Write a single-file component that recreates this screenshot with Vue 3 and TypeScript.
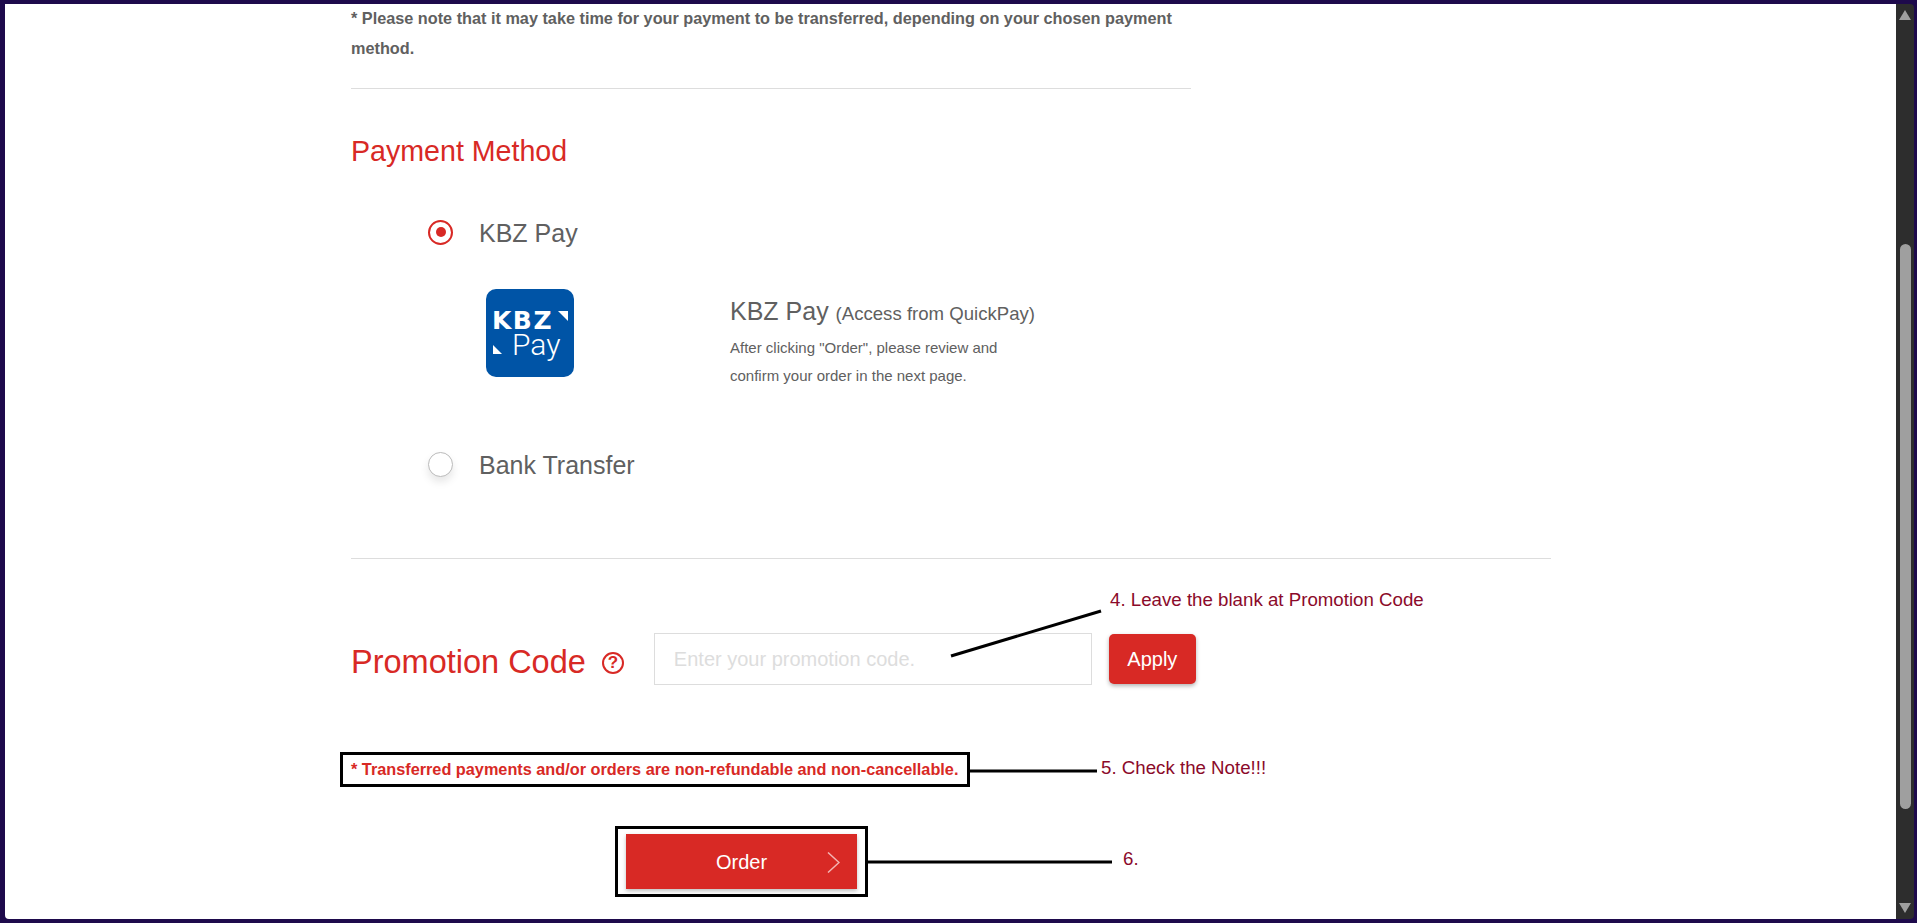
<template>
  <div class="frame">
    <div class="page">
      <div class="content">
        <p class="transfer-note">
          * Please note that it may take time for your payment to be transferred, depending on your chosen payment
          method.
        </p>
        <hr class="rule rule-short" />

        <h2 class="section-title">Payment Method</h2>

        <div class="method-row" @click="method = 'kbz'">
          <span :class="['radio', { checked: method === 'kbz' }]"></span>
          <span class="method-name">KBZ Pay</span>
        </div>

        <div class="method-detail">
          <svg class="kbz-logo" viewBox="0 0 88 88" width="88" height="88">
            <rect width="88" height="88" rx="10" fill="#0054a6" />
            <text x="6" y="40" class="logo-kbz">KBZ</text>
            <text x="26" y="66" class="logo-pay">Pay</text>
            <polygon points="72,22 82,22 82,32" fill="#fff" />
            <polygon points="7,56 7,65 16,65" fill="#fff" />
          </svg>
          <div class="detail-text">
            <div class="detail-title">KBZ Pay <small>(Access from QuickPay)</small></div>
            <p class="detail-desc">
              After clicking "Order", please review and<br />
              confirm your order in the next page.
            </p>
          </div>
        </div>

        <div class="method-row bank-row" @click="method = 'bank'">
          <span :class="['radio', { checked: method === 'bank' }]"></span>
          <span class="method-name">Bank Transfer</span>
        </div>

        <hr class="rule rule-long" />

        <div class="promo-row">
          <h2 class="promo-title">Promotion Code</h2>
          <span class="help-icon">?</span>
          <input class="promo-input" type="text" placeholder="Enter your promotion code." />
          <button class="apply-btn">Apply</button>
        </div>

        <p class="refund-note">* Transferred payments and/or orders are non-refundable and non-cancellable.</p>

        <button class="order-btn">
          Order
          <svg class="order-arrow" viewBox="0 0 13 21" width="13" height="21">
            <path d="M1 0.5 L12 10.5 L1 20.5" fill="none" stroke="#f3b5b3" stroke-width="1.5" />
          </svg>
        </button>
      </div>

      <!-- annotations drawn over the page -->
      <svg class="marks" width="1892" height="915">
        <line x1="946" y1="652" x2="1096" y2="607" stroke="#000" stroke-width="3" />
        <rect x="336.5" y="749.5" width="627" height="32" fill="none" stroke="#000" stroke-width="3" />
        <line x1="964" y1="767" x2="1092" y2="767" stroke="#000" stroke-width="3" />
        <rect x="611.5" y="823.5" width="250" height="68" fill="none" stroke="#000" stroke-width="3" />
        <line x1="862" y1="858" x2="1107" y2="858" stroke="#000" stroke-width="3" />
      </svg>
      <span class="mark-text mark-4">4. Leave the blank at Promotion Code</span>
      <span class="mark-text mark-5">5. Check the Note!!!</span>
      <span class="mark-text mark-6">6.</span>
    </div>

    <div class="scrollbar">
      <span class="arrow arrow-up"></span>
      <div class="track"><div class="thumb"></div></div>
      <span class="arrow arrow-down"></span>
    </div>
  </div>
</template>

<script setup lang="ts">
import { ref } from "vue";

const method = ref<"kbz" | "bank">("kbz");
</script>

<style>
html,
body {
  margin: 0;
  overflow: hidden;
}
</style>

<style scoped>
.frame {
  display: flex;
  width: 1917px;
  height: 923px;
  box-sizing: border-box;
  padding: 4px 3px 4px 5px;
  background: #1e0a4c;
  font-family: "Liberation Sans", Arial, sans-serif;
  color: #606060;
}

.page {
  position: relative;
  flex: 1;
  background: #fff;
  border-bottom-left-radius: 4px;
  overflow: hidden;
}

.content {
  padding-left: 346px;
}

.transfer-note {
  width: 840px;
  margin: -1px 0 0;
  font-size: 16.25px;
  font-weight: bold;
  line-height: 30px;
}

.rule {
  height: 1px;
  margin: 0;
  border: none;
  background: #ddd;
}

.rule-short {
  width: 840px;
  margin-top: 25px;
}

.rule-long {
  width: 1200px;
  margin-top: 78px;
}

.section-title {
  margin: 44px 0 0;
  font-size: 28.6px;
  font-weight: normal;
  line-height: 36px;
  color: #d82925;
}

.method-row {
  display: flex;
  align-items: center;
  height: 32px;
  margin: 47px 0 0 77px;
  cursor: pointer;
}

.radio {
  position: relative;
  width: 25px;
  height: 25px;
  box-sizing: border-box;
  border: 1px solid #bbb;
  border-radius: 50%;
  background: #fff;
  box-shadow: 0 5px 8px rgba(0, 0, 0, 0.1);
}

.radio.checked {
  border: 2px solid #d82925;
  box-shadow: none;
}

.radio.checked::after {
  content: "";
  position: absolute;
  top: 5.5px;
  left: 5.5px;
  width: 10px;
  height: 10px;
  border-radius: 50%;
  background: #d82925;
}

.method-name {
  margin-left: 26px;
  padding-top: 2px;
  font-size: 25px;
}

.method-detail {
  display: flex;
  margin: 41px 0 0 135px;
}

.kbz-logo {
  flex-shrink: 0;
}

.logo-kbz {
  font-family: "DejaVu Sans", "Liberation Sans", sans-serif;
  font-size: 25px;
  font-weight: bold;
  letter-spacing: 1.5px;
  fill: #fff;
}

.logo-pay {
  font-family: Roboto, "Liberation Sans", sans-serif;
  font-size: 30px;
  font-weight: 300;
  fill: #fff;
}

.detail-text {
  margin: 6px 0 0 156px;
}

.detail-title {
  font-size: 25px;
  line-height: 32px;
}

.detail-title small {
  font-size: 18.6px;
}

.detail-desc {
  margin: 4px 0 0;
  font-size: 15px;
  line-height: 28px;
}

.bank-row {
  margin-top: 58px;
}

.promo-row {
  display: flex;
  align-items: center;
  margin-top: 73px;
}

.promo-title {
  margin: 0;
  padding-top: 6px;
  font-size: 32.5px;
  font-weight: normal;
  line-height: 48px;
  color: #d82925;
}

.help-icon {
  display: flex;
  align-items: center;
  justify-content: center;
  width: 22px;
  height: 22px;
  box-sizing: border-box;
  margin: 8px 0 0 16px;
  border: 2px solid #d82925;
  border-radius: 50%;
  font-size: 17px;
  font-weight: bold;
  color: #d82925;
}

.promo-input {
  width: 438px;
  height: 52px;
  box-sizing: border-box;
  margin-left: 30px;
  padding: 0 19px;
  border: 1px solid #ddd;
  outline: none;
  font-family: inherit;
  font-size: 20px;
}

.promo-input::placeholder {
  color: #ddd;
}

.apply-btn {
  width: 87px;
  height: 50px;
  margin-left: 17px;
  border: none;
  border-radius: 5px;
  background: #d82925;
  box-shadow: 0 2px 4px rgba(0, 0, 0, 0.3);
  font-family: inherit;
  font-size: 20px;
  color: #fff;
}

.refund-note {
  margin: 71px 0 0;
  font-size: 16.27px;
  font-weight: bold;
  line-height: 24px;
  color: #d82925;
}

.order-btn {
  position: relative;
  display: block;
  width: 231px;
  height: 55px;
  margin: 53px 0 0 275px;
  padding-top: 3px;
  border: none;
  background: #d82925;
  box-shadow: 0 2px 4px rgba(0, 0, 0, 0.25);
  font-family: inherit;
  font-size: 20px;
  color: #fff;
}

.order-arrow {
  position: absolute;
  top: 18px;
  right: 17px;
}

.marks {
  position: absolute;
  top: 0;
  left: 0;
  pointer-events: none;
}

.mark-text {
  position: absolute;
  font-size: 18.7px;
  line-height: 22px;
  color: #8b0a2a;
  white-space: nowrap;
}

.mark-4 {
  top: 585px;
  left: 1105px;
}

.mark-5 {
  top: 753px;
  left: 1096px;
}

.mark-6 {
  top: 844px;
  left: 1118px;
}

.scrollbar {
  display: flex;
  flex-direction: column;
  align-items: center;
  width: 18px;
  flex-shrink: 0;
  background: #2d2d2d;
  border-bottom-right-radius: 4px;
  border-top-right-radius: 4px;
}

.track {
  flex: 1;
  width: 100%;
  min-height: 0;
}

.thumb {
  width: 11px;
  height: 565px;
  margin: 218px auto 0;
  background: #9f9f9f;
  border-radius: 6px;
}

.arrow {
  flex-shrink: 0;
  width: 0;
  height: 0;
  margin: 6px 0;
  border-left: 6px solid transparent;
  border-right: 6px solid transparent;
}

.arrow-up {
  border-bottom: 10px solid #9f9f9f;
}

.arrow-down {
  border-top: 10px solid #9f9f9f;
}
</style>
